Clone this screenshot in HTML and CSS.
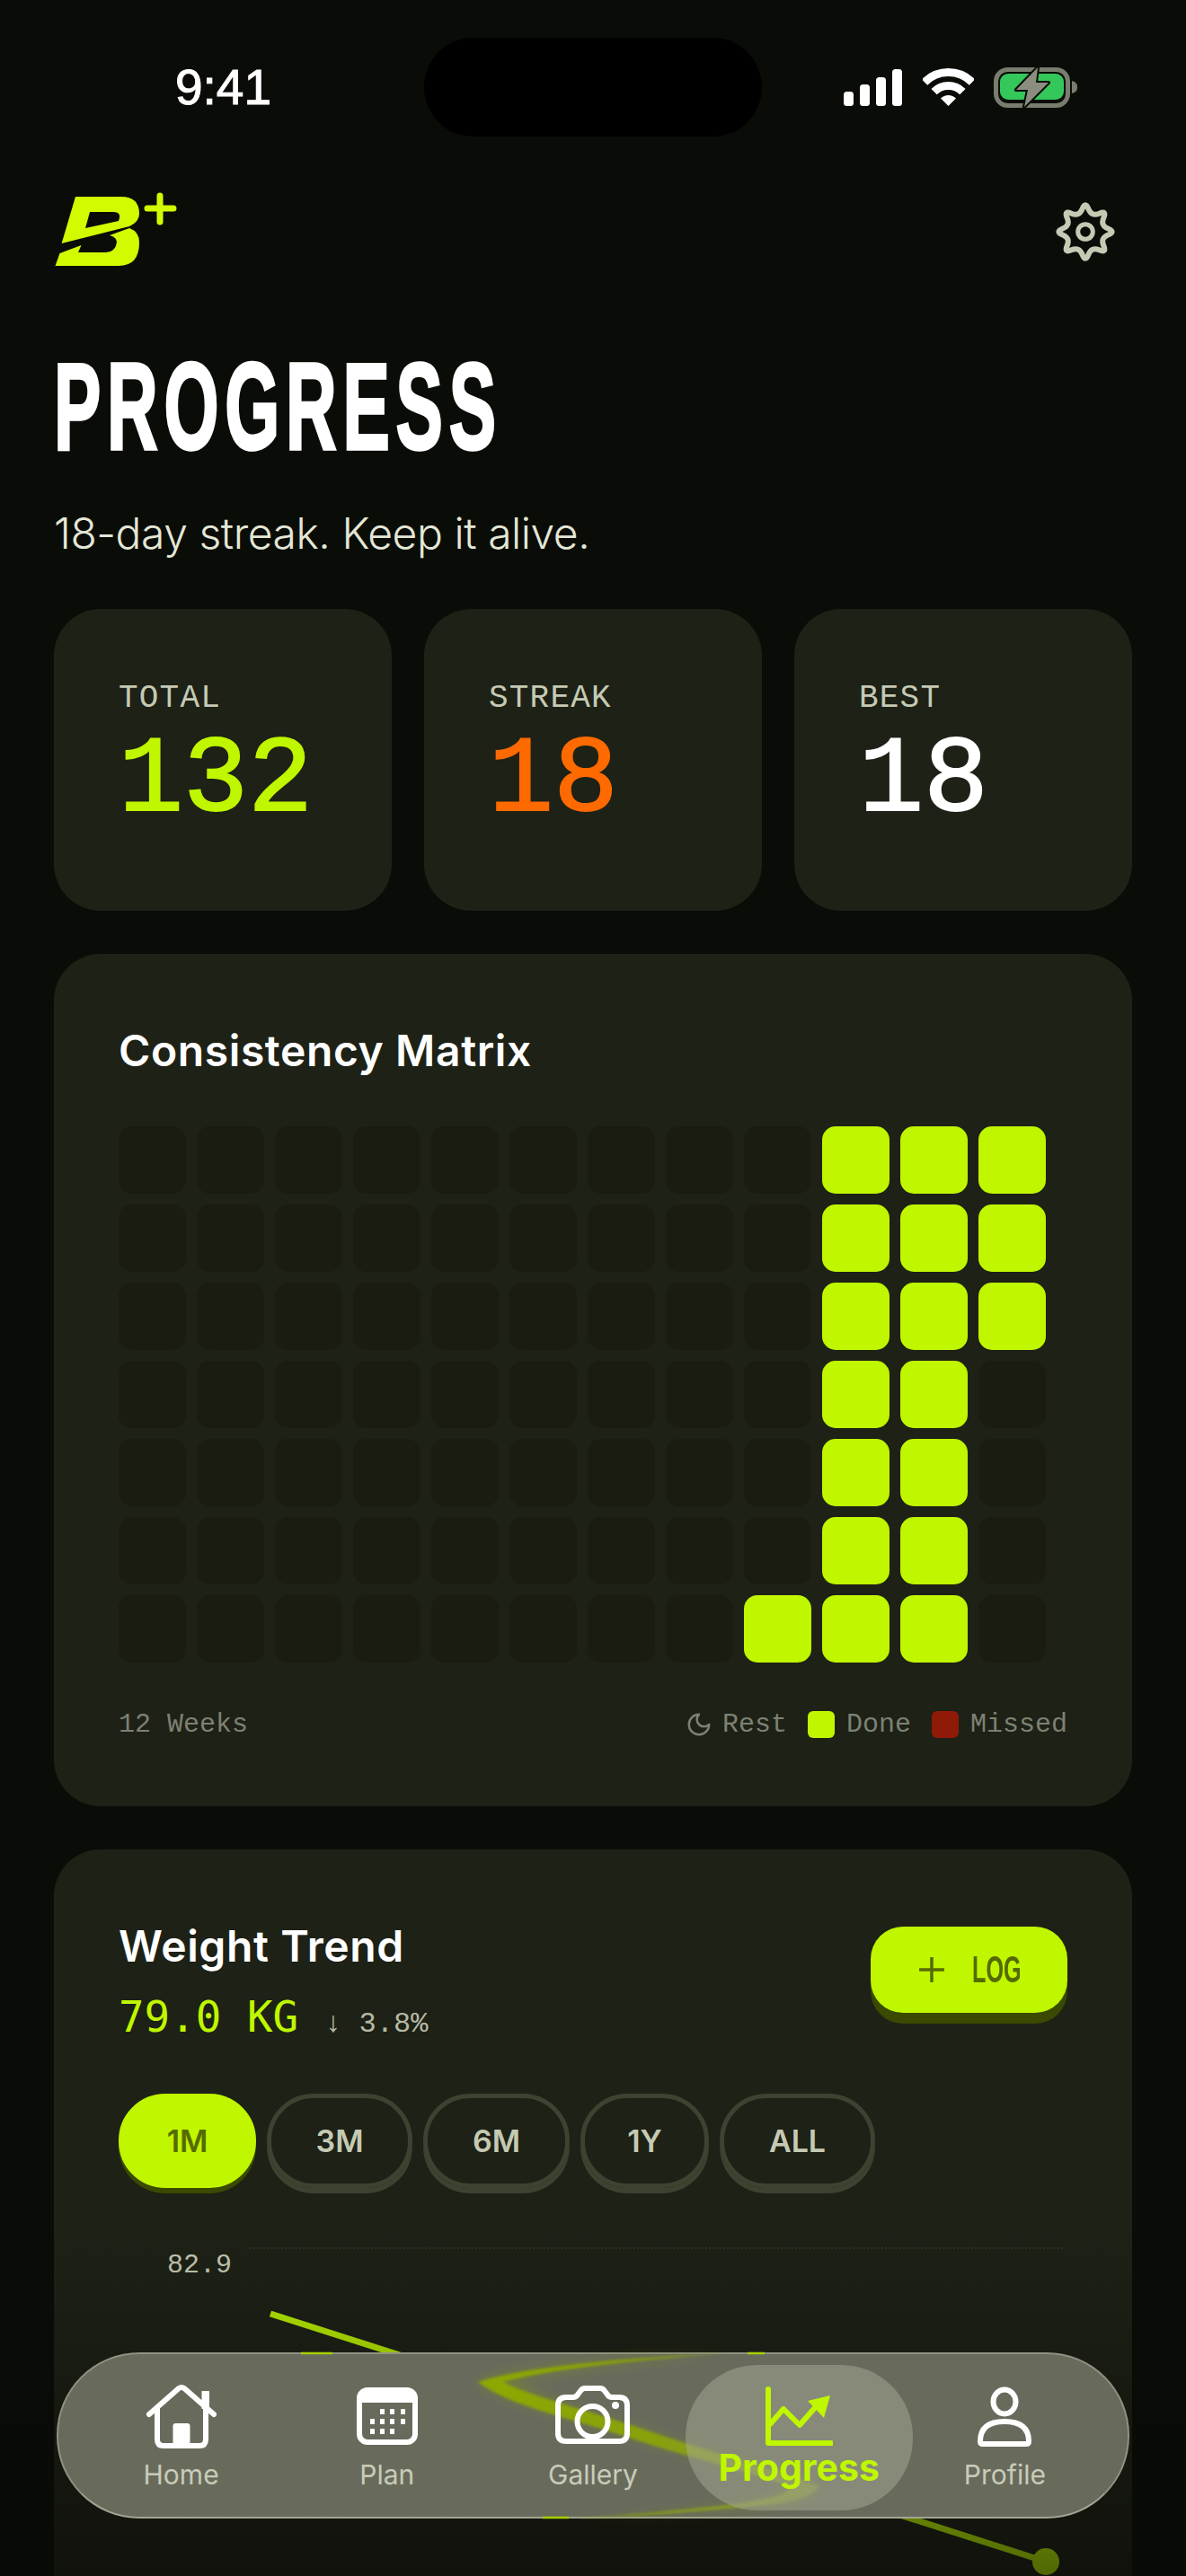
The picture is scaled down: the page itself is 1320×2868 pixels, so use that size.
FILE: index.html
```html
<!DOCTYPE html>
<html lang="en">
<head>
<meta charset="utf-8">
<title>Progress</title>
<link rel="stylesheet" href="styles.css">
</head>
<body>
<div class="screen">
  <header class="status">
    <span class="clock">9:41</span>
    <div class="island"></div>
    <div class="status-icons">
      <svg class="ic-signal" viewBox="0 0 65 41"><rect x="0" y="25" width="11" height="16" rx="3.5"/><rect x="18" y="17" width="11" height="24" rx="3.5"/><rect x="36" y="9" width="11" height="32" rx="3.5"/><rect x="54" y="0" width="11" height="41" rx="3.5"/></svg>
      <svg class="ic-wifi" viewBox="0 0 57 42"><path class="arc" d="M2 15.5A37.5 37.5 0 0 1 55 15.5"/><path class="arc" d="M12.6 26.1A22.5 22.5 0 0 1 44.4 26.1"/><path d="M28.5 42 20 33.5A12 12 0 0 1 37 33.5Z"/></svg>
      <svg class="ic-battery" viewBox="0 0 94 46">
        <rect class="batt-shell" x="2.5" y="3.5" width="80" height="40" rx="13"/>
        <rect class="batt-fill" x="7" y="8" width="71" height="29" rx="9"/>
        <path class="batt-cap" d="M87 16c4 1 6 3 6 7s-2 6-6 7Z"/>
        <path class="batt-bolt" d="M49 1 25 26h13l-4 19 27-27H47Z"/>
      </svg>
    </div>
  </header>

  <main class="page">
    <div class="topbar">
      <svg class="logo" viewBox="60 214 138 84">
        <path fill-rule="evenodd" d="M84 219H135Q155 219 155 238Q155 247 144 252L68.6 271ZM100 236 95 254 132 246Q136 236 126 236Z"/>
        <path d="M61.5 296 66.5 282 90.5 273 87 281H118Q128 281 130 270Q130 264 122 262L144 254Q155 258 155 270Q155 296 132 296Z"/>
        <path class="logo-plus" d="M178 218V247M164 232H193"/>
      </svg>
      <svg class="gear" viewBox="-36 -36 72 72">
        <path d="M3.44 -25.3Q6.89 -16.63 15.47 -20.33T20.33 -15.47T25.3 -3.44T25.3 3.44T20.33 15.47T15.47 20.33T3.44 25.3T-3.44 25.3T-15.47 20.33T-20.33 15.47T-25.3 3.44T-25.3 -3.44T-20.33 -15.47T-15.47 -20.33T-3.44 -25.3T3.44 -25.3Z"/>
        <circle r="8.3"/>
      </svg>
    </div>

    <h1 class="title"><span>PROGRESS</span></h1>
    <p class="subtitle">18-day streak. Keep it alive.</p>

    <section class="stats">
      <div class="stat"><div class="stat-label">TOTAL</div><div class="stat-value lime">132</div></div>
      <div class="stat"><div class="stat-label">STREAK</div><div class="stat-value orange">18</div></div>
      <div class="stat"><div class="stat-label">BEST</div><div class="stat-value">18</div></div>
    </section>

    <section class="card matrix-card">
      <h2 class="card-title">Consistency Matrix</h2>
      <div class="matrix">
        <i></i><i></i><i></i><i></i><i></i><i></i><i></i><i></i><i></i><i class="on"></i><i class="on"></i><i class="on"></i>
        <i></i><i></i><i></i><i></i><i></i><i></i><i></i><i></i><i></i><i class="on"></i><i class="on"></i><i class="on"></i>
        <i></i><i></i><i></i><i></i><i></i><i></i><i></i><i></i><i></i><i class="on"></i><i class="on"></i><i class="on"></i>
        <i></i><i></i><i></i><i></i><i></i><i></i><i></i><i></i><i></i><i class="on"></i><i class="on"></i><i></i>
        <i></i><i></i><i></i><i></i><i></i><i></i><i></i><i></i><i></i><i class="on"></i><i class="on"></i><i></i>
        <i></i><i></i><i></i><i></i><i></i><i></i><i></i><i></i><i></i><i class="on"></i><i class="on"></i><i></i>
        <i></i><i></i><i></i><i></i><i></i><i></i><i></i><i></i><i class="on"></i><i class="on"></i><i class="on"></i><i></i>
      </div>
      <div class="legend">
        <span>12 Weeks</span>
        <div class="legend-keys">
          <span class="key key-rest"><svg viewBox="0 0 24 24"><path d="M12 3a6 6 0 0 0 9 9 9 9 0 1 1-9-9Z"/></svg>Rest</span>
          <span class="key"><b class="swatch done"></b>Done</span>
          <span class="key"><b class="swatch missed"></b>Missed</span>
        </div>
      </div>
    </section>

    <section class="card weight-card">
      <div class="weight-head">
        <div>
          <h2 class="card-title">Weight Trend</h2>
          <div class="weight-value"><span class="kg">79.0 KG</span><span class="delta">↓ 3.8%</span></div>
        </div>
        <button class="log-btn"><svg viewBox="0 0 28 28"><path d="M14 1V27M1 14H27"/></svg><span>LOG</span></button>
      </div>
      <div class="ranges">
        <span class="range active">1M</span>
        <span class="range">3M</span>
        <span class="range">6M</span>
        <span class="range">1Y</span>
        <span class="range">ALL</span>
      </div>
      <div class="chart">
        <div class="axis">82.9</div>
        <svg class="plot" viewBox="0 0 911 368">
          <line class="grid-line" x1="0" y1="4" x2="909" y2="4"/>
          <line class="trend" x1="24" y1="77" x2="887" y2="353"/>
          <circle class="trend-dot" cx="887" cy="353" r="15"/>
        </svg>
      </div>
    </section>
  </main>

  <div class="fade"></div>

  <nav class="tabbar">
    <svg class="lens" viewBox="63 2619 1194 185">
      <defs>
        <linearGradient id="lensFade" gradientUnits="userSpaceOnUse" x1="530" y1="0" x2="930" y2="0">
          <stop offset="0" stop-color="#8ea800"/>
          <stop offset="0.5" stop-color="#8ea800" stop-opacity="0.85"/>
          <stop offset="1" stop-color="#a0b040" stop-opacity="0.4"/>
        </linearGradient>
      </defs>
      <path class="lens-glow" d="M528 2652C590 2632 700 2624 810 2620C700 2630 620 2640 572 2652C600 2668 650 2684 720 2707C790 2730 860 2748 915 2768C900 2788 860 2790 800 2795C740 2800 690 2802 640 2804C700 2800 780 2794 830 2786C860 2780 880 2775 882 2768C820 2745 760 2732 700 2712C630 2688 570 2678 528 2652Z"/>
      <path class="lens-body" d="M532 2652C590 2634 700 2625 810 2620C700 2628 610 2638 560 2652C590 2668 650 2682 720 2706C790 2730 860 2748 912 2768C900 2786 860 2789 800 2794C740 2799 690 2802 640 2804C700 2800 780 2793 830 2786C860 2781 878 2776 880 2768C820 2748 760 2734 700 2714C630 2690 570 2680 532 2652Z"/>
      <path class="lens-tick" d="M335 2620H370M832 2620H851M604 2803H633"/>
    </svg>
    <a class="tab">
      <svg class="tab-icon" width="82" height="74" viewBox="0 0 82 74">
        <path d="M5 34 38 5Q41 3 44 5L77 34"/>
        <path d="M14 28V62Q14 69 21 69H61Q68 69 68 62V28"/>
        <rect class="solid" x="63.5" y="8" width="8.5" height="20"/>
        <path class="solid" d="M31.5 70V47Q31.5 44 34.5 44H47.5Q50.5 44 50.5 47V70Z"/>
      </svg>
      <span>Home</span>
    </a>
    <a class="tab">
      <svg class="tab-icon" width="68" height="74" viewBox="0 0 68 74">
        <rect x="3" y="7" width="62" height="58" rx="9"/>
        <path class="solid" d="M3 16Q3 7 12 7H56Q65 7 65 16V21H3Z"/>
        <g class="solid">
          <rect x="26" y="28" width="5" height="6"/><rect x="37" y="28" width="5" height="6"/><rect x="49" y="28" width="5" height="6"/>
          <rect x="15" y="39" width="5" height="6"/><rect x="26" y="39" width="5" height="6"/><rect x="37" y="39" width="5" height="6"/><rect x="49" y="39" width="5" height="6"/>
          <rect x="15" y="50" width="5" height="6"/><rect x="26" y="50" width="5" height="6"/><rect x="37" y="50" width="5" height="6"/>
        </g>
      </svg>
      <span>Plan</span>
    </a>
    <a class="tab">
      <svg class="tab-icon" width="83" height="74" viewBox="0 0 83 74">
        <path d="M3 24Q3 15 12 15H20Q23 15 25 12L28 8Q30 5 33 5H50Q53 5 55 8L58 12Q60 15 63 15H71Q80 15 80 24V55Q80 64 71 64H12Q3 64 3 55Z"/>
        <circle cx="41.5" cy="42" r="17"/>
        <circle class="solid" cx="67" cy="24" r="4"/>
      </svg>
      <span>Gallery</span>
    </a>
    <a class="tab tab-active">
      <svg class="tab-icon" width="76" height="74" viewBox="0 0 76 74">
        <path d="M4 6V66H74"/>
        <path d="M6 45 21 28 39 46 60 22"/>
        <path class="solid" d="M48 19 73 13 66 38Z"/>
      </svg>
      <span>Progress</span>
    </a>
    <a class="tab">
      <svg class="tab-icon" width="60" height="74" viewBox="0 0 60 74">
        <ellipse cx="30" cy="20" rx="12.5" ry="13.5"/>
        <path d="M3 64Q3 42 30 42T57 64Q57 67 54 67H6Q3 67 3 64Z"/>
      </svg>
      <span>Profile</span>
    </a>
  </nav>
</div>
</body>
</html>
```

FILE: styles.css
```css
* { box-sizing: border-box; }

html, body {
  margin: 0;
  height: 2868px;
  overflow: hidden;
  background: #0a0c08;
}

body {
  color: #fff;
  font-family: "Inter", "Liberation Sans", sans-serif;
}

.screen {
  position: relative;
  width: 1320px;
  height: 2868px;
  overflow: hidden;
}

/* status bar */
.status {
  display: grid;
  grid-template-columns: 472px 376px 1fr;
  align-items: center;
  height: 152px;
  padding-top: 42px;
}

.clock {
  padding-left: 195px;
  font: 400 55px/1 "Liberation Sans", sans-serif;
  -webkit-text-stroke: 1px #fff;
}

.island {
  height: 110px;
  border-radius: 55px;
  background: #000;
}

.status-icons {
  display: flex;
  align-items: center;
  gap: 23px;
  height: 46px;
  padding-left: 91px;
}

.ic-signal { width: 65px; height: 41px; fill: #fff; }
.ic-wifi { width: 57px; height: 42px; fill: #fff; }
.ic-wifi .arc { fill: none; stroke: #fff; stroke-width: 9; }
.ic-battery { width: 94px; height: 46px; margin-left: -1px; }
.batt-shell { fill: none; stroke: #797d6e; stroke-width: 5; }
.batt-fill { fill: #34c759; }
.batt-cap { fill: #797d6e; }
.batt-bolt { fill: #8a8e7e; stroke: #0a0c08; stroke-width: 4; stroke-linejoin: round; paint-order: stroke; }

/* page flow */
.page { padding: 0 60px; }

.topbar {
  display: flex;
  justify-content: space-between;
  align-items: flex-start;
  margin-top: 62px;
}

.logo { width: 138px; height: 84px; fill: #d2fb00; }
.logo-plus { fill: none; stroke: #d2fb00; stroke-width: 7; stroke-linecap: round; }

.gear {
  width: 72px;
  height: 72px;
  margin: 8px 16px 0 0;
  fill: none;
  stroke: #c5cab4;
  stroke-width: 6;
}
.gear circle { stroke-width: 5; }

.title {
  margin: 99px 0 0;
  font: 700 138px/110px "Liberation Sans", sans-serif;
  white-space: nowrap;
}
.title span {
  display: inline-block;
  letter-spacing: 12px;
  transform: scaleX(0.568);
  transform-origin: 0 50%;
  -webkit-text-stroke: 3.5px #fff;
}

.subtitle {
  margin: 57px 0 0;
  font-size: 48px;
  font-weight: 300;
  letter-spacing: -0.45px;
  line-height: 60px;
  color: #e4e7d6;
}

/* headline numbers */
.stats {
  display: grid;
  grid-template-columns: repeat(3, 376px);
  gap: 36px;
  margin-top: 54px;
}

.stat {
  height: 336px;
  padding: 80px 72px 0;
  border-radius: 52px;
  background: #1e2116;
}

.stat-label {
  font: 400 36px/40px "Liberation Mono", monospace;
  letter-spacing: 1.2px;
  color: #c5cab4;
}

.stat-value {
  margin-top: 12px;
  font: 400 120px/120px "Liberation Mono", monospace;
  -webkit-text-stroke: 2px currentColor;
}

.lime { color: #bff600; }
.orange { color: #ff6a00; }

/* cards */
.card {
  margin-top: 48px;
  padding: 78px 72px 71px;
  border-radius: 52px;
  background: #1e2116;
}

.card-title {
  margin: 0;
  font-size: 48px;
  font-weight: 600;
  letter-spacing: 0.6px;
  line-height: 60px;
}

.matrix {
  display: grid;
  grid-template-columns: repeat(12, 75px);
  grid-auto-rows: 75px;
  gap: 12px;
  margin-top: 54px;
}
.matrix i { border-radius: 15px; background: #1a1c12; }
.matrix i.on { background: #bff600; }

.legend {
  display: flex;
  justify-content: space-between;
  align-items: center;
  margin-top: 49px;
  font: 400 30px/40px "Liberation Mono", monospace;
  color: #7d8172;
}

.legend-keys { display: flex; gap: 23px; }
.key { display: flex; align-items: center; gap: 13px; }
.key svg {
  width: 30px;
  height: 30px;
  margin-right: -2px;
  fill: none;
  stroke: #7d8172;
  stroke-width: 2;
  stroke-linecap: round;
  stroke-linejoin: round;
}
.swatch { width: 30px; height: 30px; border-radius: 6px; }
.swatch.done { background: #bff600; }
.swatch.missed { background: #8f1a08; }

/* weight card */
.weight-head {
  display: flex;
  justify-content: space-between;
  align-items: flex-start;
}

.weight-value {
  display: flex;
  align-items: baseline;
  gap: 29px;
  margin-top: 19px;
  line-height: 60px;
}
.kg { font: 400 47.5px/60px "DejaVu Sans Mono", monospace; color: #bff600; }
.delta { font: 400 32px/60px "Liberation Mono", monospace; color: #b5b9a5; }

.log-btn {
  display: flex;
  align-items: center;
  gap: 31px;
  width: 219px;
  height: 96px;
  margin-top: 8px;
  padding: 0 0 0 54px;
  border: 0;
  border-radius: 36px;
  background: #bff600;
  box-shadow: 0 12px 0 #3a4a00;
  color: #556b00;
}
.log-btn svg { flex: none; width: 28px; height: 28px; fill: none; stroke: #556b00; stroke-width: 3.5; stroke-linecap: round; }
.log-btn span {
  display: inline-block;
  font: 700 42px/1 "Liberation Sans", sans-serif;
  transform: scaleX(0.6);
  transform-origin: 0 50%;
  white-space: nowrap;
}

.ranges {
  display: grid;
  grid-template-columns: 153px 162px 163px 143px 173px;
  gap: 12px;
  margin-top: 47px;
}

.range {
  display: flex;
  justify-content: center;
  align-items: center;
  height: 105px;
  border: 5px solid #3e4230;
  border-radius: 52px;
  box-shadow: 0 6px 0 #3e4230;
  font-size: 34px;
  font-weight: 600;
  color: #c5cab4;
}
.range.active {
  border-color: #bff600;
  background: #bff600;
  box-shadow: 0 6px 0 #3a4a00;
  color: #556b00;
}

.chart {
  display: flex;
  gap: 19px;
  margin-top: 63px;
}

.axis {
  width: 126px;
  padding-top: 3px;
  font: 400 30px/40px "Liberation Mono", monospace;
  text-align: right;
  color: #c5cab4;
}

.plot { flex: none; width: 911px; height: 368px; }
.grid-line { stroke: #34382a; stroke-width: 1.5; stroke-dasharray: 2 2; }
.trend { stroke: #bff600; stroke-width: 7; }
.trend-dot { fill: #bff600; }

/* fade under the tab bar */
.fade {
  position: absolute;
  left: 0;
  right: 0;
  top: 2480px;
  bottom: 0;
  background: linear-gradient(rgba(7, 9, 5, 0), rgba(7, 9, 5, 0.6));
}

/* floating tab bar */
.tabbar {
  position: absolute;
  left: 63px;
  top: 2619px;
  display: grid;
  grid-template-columns: repeat(5, 1fr);
  width: 1194px;
  height: 185px;
  padding: 33px 22px 0;
  border: 2.5px solid #8f9280;
  border-bottom-color: #a2a591;
  border-radius: 92px;
  background: #686b5c;
}

.lens {
  position: absolute;
  left: -2.5px;
  top: -2.5px;
  width: 1194px;
  height: 185px;
  overflow: visible;
}
.lens-glow { fill: #8ea800; opacity: 0.3; filter: blur(7px); }
.lens-body { fill: url(#lensFade); filter: blur(1.5px); }
.lens-tick { fill: none; stroke: #a6d000; stroke-width: 2.5; }

.tab {
  position: relative;
  display: flex;
  flex-direction: column;
  align-items: center;
  font-size: 30px;
  line-height: 36px;
  color: #c8ccb8;
}
.tab-icon {
  position: relative;
  display: block;
  fill: none;
  stroke: #fff;
  stroke-width: 6;
  stroke-linecap: round;
  stroke-linejoin: round;
}
.tab-icon .solid { fill: #fff; stroke: none; }
.tab > span { position: relative; margin-top: 9px; }

.tab-active { color: #bff600; }
.tab-active::before {
  content: "";
  position: absolute;
  left: -12px;
  right: -12px;
  top: -21px;
  height: 162px;
  border-radius: 80px;
  background: rgba(165, 170, 148, 0.5);
}
.tab-active .tab-icon { stroke: #bff600; }
.tab-active .tab-icon .solid { fill: #bff600; }
.tab-active > span {
  margin-top: -3px;
  font-size: 41px;
  font-weight: 700;
  line-height: 44px;
}
```
